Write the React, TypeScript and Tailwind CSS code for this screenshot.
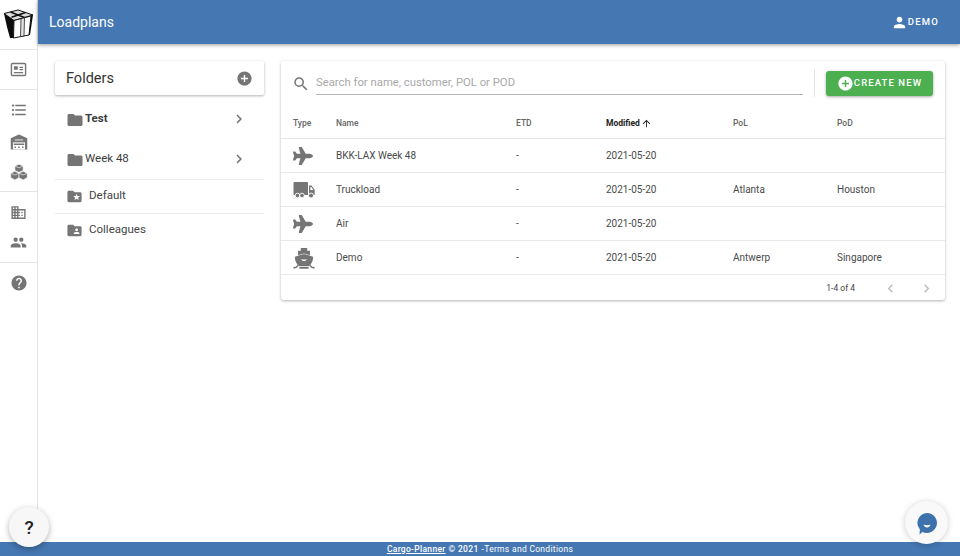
import {
  MdAddCircle,
  MdChevronLeft,
  MdChevronRight,
  MdDomain,
  MdFolder,
  MdFolderShared,
  MdFolderSpecial,
  MdFormatListBulleted,
  MdHelp,
  MdPeople,
  MdPerson,
  MdSearch,
  MdArrowUpward,
} from "react-icons/md";
import { FaPlane } from "react-icons/fa";

const font = "font-['Roboto','Liberation_Sans',sans-serif]";

function BoxLogo() {
  return (
    <svg width="38" height="49" viewBox="0 0 38 49" aria-hidden>
      <path d="M4 13.500 L18 10 L33 15 L14 20.500 Z" fill="#dcdcdc" stroke="#111" strokeWidth="1" />
      <path d="M10.500 12 L25 17.800 M25.500 12.500 L11.500 17.200" stroke="#111" strokeWidth="1.500" />
      <path d="M4 13.500 L14 20.500 L13.500 38 L10 38 L7 27 Z" fill="#0d0d0d" />
      <path d="M14 20.500 L31 16 L29 35 L13.500 38 Z" fill="#fff" stroke="#111" strokeWidth="1" />
      <path d="M21 18.800 L24.500 17.800 L24 36 L20.500 36.600 Z" fill="#e2e2e2" stroke="#222" strokeWidth="0.8" />
      <path d="M31 16 L33 15 L30 35 L29 35 Z" fill="#0d0d0d" />
    </svg>
  );
}

function CardIcon() {
  return (
    <svg width="17" height="17" viewBox="0 0 24 24" aria-hidden>
      <rect x="2" y="3.500" width="20" height="17" rx="1.500" fill="none" stroke="#757575" strokeWidth="2" />
      <path d="M5.500 7.500h5.500v5H5.500zM13.500 8h5v1.800h-5zM13.500 11.200h5V13h-5zM5.500 15.500h13v1.800h-13z" fill="#757575" />
    </svg>
  );
}

function WarehouseIcon() {
  return (
    <svg width="18" height="18" viewBox="0 0 24 24" aria-hidden>
      <path d="M12 2 L23 7 V22 H1 V7 Z" fill="#757575" />
      <path d="M6.500 8.500 h11 v1.500 h-11z" fill="#ddd" />
      <path d="M4 12.500 h16 V22 H4z" fill="#fff" />
      <path d="M5 14h14v2H5z" fill="#757575" />
      <path d="M6 18h2v2H6zM11 18h2v2h-2zM16 18h2v2h-2z" fill="#757575" />
    </svg>
  );
}

function CubesIcon() {
  return (
    <svg width="18" height="18" viewBox="0 0 24 24" aria-hidden>
      <g fill="#757575" stroke="#fff" strokeWidth="0.8">
        <path d="M12 1.500 L17.500 4 V10 L12 12.500 L6.500 10 V4 Z" />
        <path d="M6.500 11 L12 13.500 V19.500 L6.500 22.500 L1 19.500 V13.500 Z" />
        <path d="M17.500 11 L23 13.500 V19.500 L17.500 22.500 L12 19.500 V13.500 Z" />
      </g>
      <path d="M6.500 4 L12 6.500 L17.500 4 M1 13.500 L6.500 16 L12 13.500 L17.500 16 L23 13.500" fill="none" stroke="#fff" strokeWidth="0.8" />
    </svg>
  );
}

function TruckIcon() {
  return (
    <svg width="22" height="18" viewBox="0 0 22 18" aria-hidden>
      <path d="M1.500 1h12.500a1 1 0 0 1 1 1v12H1.500a1 1 0 0 1-1-1V2a1 1 0 0 1 1-1Z" fill="#757575" />
      <path d="M16 4.500h2.500L21.700 9v5H16Z" fill="#757575" />
      <path d="M17.300 6h1l2 3h-3Z" fill="#fff" />
      <circle cx="4.500" cy="14.500" r="2.300" fill="#757575" stroke="#fff" strokeWidth="0.9" />
      <circle cx="9" cy="14.500" r="2.300" fill="#757575" stroke="#fff" strokeWidth="0.9" />
      <circle cx="18" cy="14.500" r="2.500" fill="#757575" stroke="#fff" strokeWidth="0.9" />
    </svg>
  );
}

function ShipIcon() {
  return (
    <svg width="22" height="22" viewBox="0 0 24 24" aria-hidden>
      <path d="M8.500 1h7v3h3V9l-6.500-2L5.500 9V4h3z" fill="#757575" />
      <path d="M2 10.500 L12 7.500 L22 10.500 C22 15 20 18.500 17.500 21 H6.500 C4 18.500 2 15 2 10.500Z" fill="#757575" />
      <path d="M9 13c2 1 4 1 6 0-.5 1.500-1.500 2.200-3 2.200s-2.500-.7-3-2.200Z" fill="#fff" />
      <path d="M0.500 22.800 C3 22.800 4.500 21.500 5.500 20 M23.500 22.800 C21 22.800 19.500 21.500 18.500 20 M7 22.800 H17" fill="none" stroke="#757575" strokeWidth="1.800" />
    </svg>
  );
}

function SideDivider() {
  return <div className="h-px w-full bg-[#e4e4e4]" />;
}

function SideIcon({ children, className }: { children: React.ReactNode; className: string }) {
  return <div className={`flex w-full items-center justify-center ${className}`}>{children}</div>;
}

function Sidebar() {
  return (
    <aside className="flex w-[38px] shrink-0 flex-col border-r border-[#e4e4e4] bg-white">
      <div className="h-[49px]">
        <BoxLogo />
      </div>
      <SideDivider />
      <SideIcon className="h-[39px]">
        <CardIcon />
      </SideIcon>
      <SideDivider />
      <SideIcon className="mt-[10px] h-[20px]">
        <MdFormatListBulleted size={18} color="#757575" />
      </SideIcon>
      <SideIcon className="mt-[12px] h-[20px]">
        <WarehouseIcon />
      </SideIcon>
      <SideIcon className="mt-[10px] h-[20px]">
        <CubesIcon />
      </SideIcon>
      <div className="mt-[9px]">
        <SideDivider />
      </div>
      <SideIcon className="mt-[10px] h-[20px]">
        <MdDomain size={17} color="#757575" />
      </SideIcon>
      <SideIcon className="mt-[10px] h-[20px]">
        <MdPeople size={17} color="#757575" />
      </SideIcon>
      <div className="mt-[10px]">
        <SideDivider />
      </div>
      <SideIcon className="mt-[10px] h-[20px]">
        <MdHelp size={18} color="#757575" />
      </SideIcon>
    </aside>
  );
}

function FolderRow({ name, bold }: { name: string; bold?: boolean }) {
  return (
    <div className="flex h-[40px] items-center pl-[11px] pr-[16px]">
      <MdFolder size={18} color="#757575" className="mt-[2px]" />
      <span className={`ml-px flex-1 text-[11.5px] text-[#3c3c3c] ${bold ? "font-bold" : ""}`}>{name}</span>
      <MdChevronRight size={18} color="#757575" />
    </div>
  );
}

function FolderPanel() {
  return (
    <section className="w-[209px] shrink-0">
      <div className="flex h-[34px] items-center justify-between rounded-[2px] bg-white pl-[11px] pr-[11px] shadow-[0_1px_3px_rgba(0,0,0,0.3)]">
        <span className="pt-px text-[14.5px] text-[#333]">Folders</span>
        <MdAddCircle size={17} color="#757575" />
      </div>
      <div className="mt-[3px]">
        <div className="pt-[1px]">
          <FolderRow name="Test" bold />
          <FolderRow name="Week 48" />
        </div>
        <div className="flex h-[34px] items-center border-t border-[#ececec] pl-[11px]">
          <MdFolderSpecial size={17} color="#757575" />
          <span className="-mt-[2px] ml-[6px] text-[11.5px] text-[#444]">Default</span>
        </div>
        <div className="flex h-[34px] items-center border-t border-[#ececec] pl-[11px]">
          <MdFolderShared size={17} color="#757575" />
          <span className="-mt-[2px] ml-[6px] text-[11.5px] text-[#444]">Colleagues</span>
        </div>
      </div>
    </section>
  );
}

const rows = [
  { type: "air", name: "BKK-LAX Week 48", etd: "-", mod: "2021-05-20", pol: "", pod: "" },
  { type: "road", name: "Truckload", etd: "-", mod: "2021-05-20", pol: "Atlanta", pod: "Houston" },
  { type: "air", name: "Air", etd: "-", mod: "2021-05-20", pol: "", pod: "" },
  { type: "sea", name: "Demo", etd: "-", mod: "2021-05-20", pol: "Antwerp", pod: "Singapore" },
];

const gridCols = "grid grid-cols-[43px_180px_90px_127px_104px_1fr] items-center";

function TypeIcon({ type }: { type: string }) {
  if (type === "air") return <FaPlane size={20} color="#757575" />;
  if (type === "road") return <TruckIcon />;
  return <ShipIcon />;
}

function LoadplanTable() {
  return (
    <section className="w-[664px] rounded-[3px] bg-white shadow-[0_1px_3px_rgba(0,0,0,0.3)]">
      <div className="flex h-[44px] items-start pt-[8px]">
        <div className="flex w-[35px] justify-start pl-[11px] pt-[6px]">
          <MdSearch size={18} color="#757575" />
        </div>
        <div className="flex h-[26px] w-[487px] items-center border-b border-[#b5b5b5] pt-[3px] text-[11.3px] text-[#a8a8a8]">
          Search for name, customer, POL or POD
        </div>
        <div className="ml-[11px] h-[28px] w-px bg-[#e4e4e4]" />
        <button className="ml-[11px] mt-[2px] flex h-[25px] w-[107px] items-center justify-center rounded-[3px] bg-[#4caf50] text-[9.5px] font-medium tracking-[1.1px] text-white shadow-[0_1px_3px_rgba(0,0,0,0.35)]">
          <MdAddCircle size={17} color="#fff" />
          CREATE NEW
        </button>
      </div>
      <div className={`${gridCols} h-[34px] border-b border-[#e6e6e6] pt-[3px] text-[8.5px] font-medium text-[#666] [&>*]:pl-[12px]`}>
        <span>Type</span>
        <span>Name</span>
        <span>ETD</span>
        <span className="flex items-center font-bold text-[#222]">
          Modified
          <MdArrowUpward size={11} color="#222" className="ml-px" />
        </span>
        <span>PoL</span>
        <span>PoD</span>
      </div>
      {rows.map((r) => (
        <div
          key={r.name}
          className={`${gridCols} h-[34px] border-b border-[#e9e9e9] text-[10px] text-[#4a4a4a] [&>*]:pl-[12px]`}
        >
          <span className="flex">
            <TypeIcon type={r.type} />
          </span>
          <span>{r.name}</span>
          <span>{r.etd}</span>
          <span>{r.mod}</span>
          <span>{r.pol}</span>
          <span>{r.pod}</span>
        </div>
      ))}
      <div className="flex h-[25px] items-center justify-end pt-px text-[8.5px] text-[#444]">
        <span>1-4 of 4</span>
        <MdChevronLeft size={17} color="#bdbdbd" className="ml-[27px]" />
        <MdChevronRight size={17} color="#bdbdbd" className="ml-[19px] mr-[10px]" />
      </div>
    </section>
  );
}

export default function App() {
  return (
    <div className={`${font} relative flex h-[556px] w-[960px] flex-col overflow-hidden bg-white`}>
      <div className="flex min-h-0 flex-1">
        <Sidebar />
        <div className="flex min-w-0 flex-1 flex-col">
          <header className="flex h-[44px] items-center justify-between bg-[#4577b2] pl-[11px] pr-[21px] shadow-[0_1px_4px_rgba(0,0,0,0.4)]">
            <span className="pt-px text-[14px] text-white">Loadplans</span>
            <span className="flex items-center text-[9.5px] font-medium tracking-[1.2px] text-white">
              <MdPerson size={17} color="#fff" />
              DEMO
            </span>
          </header>
          <main className="flex gap-[17px] pl-[17px] pt-[17px]">
            <FolderPanel />
            <LoadplanTable />
          </main>
        </div>
      </div>
      <footer className="flex h-[14px] items-center justify-center bg-[#4577b2] text-[8.5px] tracking-[0.3px] text-white">
        <span className="font-medium underline">Cargo-Planner</span>
        <span className="ml-[3px] font-medium">© 2021</span>
        <span className="ml-[3px]">-Terms and Conditions</span>
      </footer>
      <button className="absolute bottom-[9px] left-[9px] flex h-[40px] w-[40px] items-center justify-center rounded-full bg-[#f7f7f7] pt-[2px] text-[19px] font-medium text-[#222] shadow-[0_2px_6px_rgba(0,0,0,0.3)]">
        ?
      </button>
      <div className="absolute bottom-[12px] right-[12px] flex h-[43px] w-[43px] items-center justify-center rounded-full bg-[#f9f9f9] shadow-[0_1px_6px_rgba(0,0,0,0.2)]">
        <svg width="24" height="24" viewBox="0 0 24 24" aria-hidden>
          <path d="M12 2a10 10 0 1 1-4.600 18.900L4.500 23.500l.4-5A10 10 0 0 1 12 2Z" fill="#3d72ad" />
          <path d="M8.500 13.500c2 1 5 1 7 0-.6 2-2 3-3.500 3s-2.900-1-3.500-3Z" fill="#fff" />
        </svg>
      </div>
    </div>
  );
}
